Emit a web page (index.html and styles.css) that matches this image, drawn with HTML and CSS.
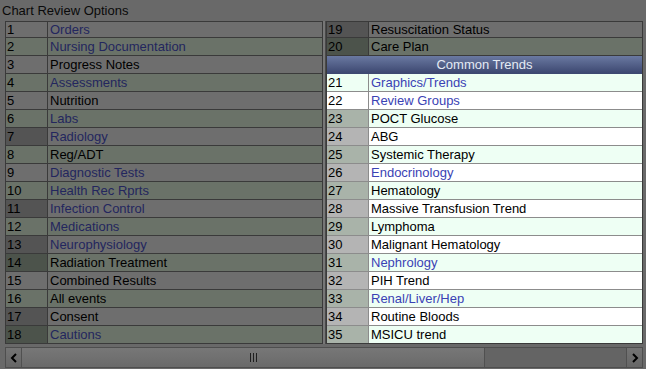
FILE: index.html
```html
<!DOCTYPE html>
<html lang="en">
<head>
    <meta charset="UTF-8">
    <title>Chart Review Options</title>
    <link rel="stylesheet" href="styles.css">
</head>
<body>
    <div class="title">Chart Review Options</div>
    <div class="panes">
        <div class="pane left">
            <div class="row"><div class="num">1</div><div class="txt link">Orders</div></div>
            <div class="row alt"><div class="num">2</div><div class="txt link">Nursing Documentation</div></div>
            <div class="row"><div class="num">3</div><div class="txt">Progress Notes</div></div>
            <div class="row alt"><div class="num">4</div><div class="txt link">Assessments</div></div>
            <div class="row"><div class="num">5</div><div class="txt">Nutrition</div></div>
            <div class="row alt"><div class="num">6</div><div class="txt link">Labs</div></div>
            <div class="row"><div class="num dark">7</div><div class="txt link">Radiology</div></div>
            <div class="row alt"><div class="num">8</div><div class="txt">Reg/ADT</div></div>
            <div class="row"><div class="num">9</div><div class="txt link">Diagnostic Tests</div></div>
            <div class="row alt"><div class="num">10</div><div class="txt link">Health Rec Rprts</div></div>
            <div class="row"><div class="num dark">11</div><div class="txt link">Infection Control</div></div>
            <div class="row alt"><div class="num">12</div><div class="txt link">Medications</div></div>
            <div class="row"><div class="num dark">13</div><div class="txt link">Neurophysiology</div></div>
            <div class="row alt"><div class="num dark">14</div><div class="txt">Radiation Treatment</div></div>
            <div class="row"><div class="num">15</div><div class="txt">Combined Results</div></div>
            <div class="row alt"><div class="num">16</div><div class="txt">All events</div></div>
            <div class="row"><div class="num dark">17</div><div class="txt">Consent</div></div>
            <div class="row alt"><div class="num dark">18</div><div class="txt link">Cautions</div></div>
        </div>
        <div class="splitter"></div>
        <div class="pane right">
            <div class="row"><div class="num dark">19</div><div class="txt">Resuscitation Status</div></div>
            <div class="row alt"><div class="num dark">20</div><div class="txt">Care Plan</div></div>
            <div class="group">Common Trends</div>
            <div class="trow mint"><div class="num">21</div><div class="txt link">Graphics/Trends</div></div>
            <div class="trow"><div class="num">22</div><div class="txt link">Review Groups</div></div>
            <div class="trow mint"><div class="num grey">23</div><div class="txt">POCT Glucose</div></div>
            <div class="trow"><div class="num grey">24</div><div class="txt">ABG</div></div>
            <div class="trow mint"><div class="num grey">25</div><div class="txt">Systemic Therapy</div></div>
            <div class="trow"><div class="num grey">26</div><div class="txt link">Endocrinology</div></div>
            <div class="trow mint"><div class="num grey">27</div><div class="txt">Hematology</div></div>
            <div class="trow"><div class="num grey">28</div><div class="txt">Massive Transfusion Trend</div></div>
            <div class="trow mint"><div class="num grey">29</div><div class="txt">Lymphoma</div></div>
            <div class="trow"><div class="num grey">30</div><div class="txt">Malignant Hematology</div></div>
            <div class="trow mint"><div class="num grey">31</div><div class="txt link">Nephrology</div></div>
            <div class="trow"><div class="num grey">32</div><div class="txt">PIH Trend</div></div>
            <div class="trow mint"><div class="num grey">33</div><div class="txt link">Renal/Liver/Hep</div></div>
            <div class="trow"><div class="num grey">34</div><div class="txt">Routine Bloods</div></div>
            <div class="trow mint"><div class="num grey">35</div><div class="txt">MSICU trend</div></div>
        </div>
    </div>
    <div class="hscroll">
        <div class="arrow">
            <svg width="8" height="10" viewBox="0 0 8 10"><path d="M6 1 L2 5 L6 9" fill="none" stroke="#000" stroke-width="2"/></svg>
        </div>
        <div class="thumb">
            <div class="grip"><span></span><span></span><span></span></div>
        </div>
        <div class="track"></div>
        <div class="arrow">
            <svg width="8" height="10" viewBox="0 0 8 10"><path d="M2 1 L6 5 L2 9" fill="none" stroke="#000" stroke-width="2"/></svg>
        </div>
    </div>
</body>
</html>
```

FILE: styles.css
```css
body {
    margin: 0;
    background: #696969;
    font-family: "Liberation Sans", Arial, sans-serif;
    font-size: 13px;
    color: #000;
}
.title {
    height: 21px;
    line-height: 22px;
    padding-left: 2px;
    color: #0a0a0a;
}
.panes {
    display: flex;
    margin-left: 5px;
    height: 323px;
}
.pane {
    border: 1px solid #3a3a3a;
    box-sizing: border-box;
    height: 323px;
}
.left {
    width: 318px;
}
.splitter {
    width: 3px;
    box-sizing: border-box;
    border-right: 1px solid #4a4a4a;
    background: #777;
}
.right {
    width: 317px;
}
.row, .trow, .group {
    display: flex;
    height: 17px;
    line-height: 17px;
    border-top: 1px solid #3a3a3a;
    background: #6e6e6e;
}
.row:first-child {
    border-top: none;
    height: 15px;
    line-height: 16px;
}
.row.alt {
    background: #6a7268;
}
.num {
    width: 42px;
    flex: none;
    padding-left: 1px;
    box-sizing: border-box;
    border-right: 1px solid #3a3a3a;
}
.num.dark {
    background: #545454;
}
.alt .num.dark {
    background: #4c534b;
}
.txt {
    padding-left: 2px;
    white-space: nowrap;
}
.link {
    color: #23265e;
}
.group {
    justify-content: center;
    color: #e4eaf4;
    background: linear-gradient(#6a79a1, #3d4871);
}
.trow {
    background: #fff;
    border-top-color: #8c8c8c;
}
.group + .trow {
    border-top-color: #3d4871;
}
.trow.mint {
    background: #eefff4;
}
.trow .num {
    border-right-color: #8c8c8c;
}
.trow .num.grey {
    background: #b4b4b4;
}
.trow.mint .num.grey {
    background: #a9b3a9;
}
.trow .link {
    color: #3a42b4;
}
.hscroll {
    display: flex;
    margin: 3px 0 0 5px;
    width: 638px;
    height: 21px;
    box-sizing: border-box;
    border: 1px solid #4e4e4e;
    background: #646464;
}
.arrow {
    width: 15px;
    flex: none;
    display: flex;
    align-items: center;
    justify-content: center;
    background: linear-gradient(#747474, #666);
    border-right: 1px solid #505050;
}
.arrow:last-child {
    border-right: none;
    border-left: 1px solid #505050;
}
.thumb {
    width: 462px;
    flex: none;
    display: flex;
    align-items: center;
    justify-content: center;
    background: linear-gradient(#777, #6a6a6a);
    border-right: 1px solid #505050;
}
.grip {
    display: flex;
    gap: 2px;
}
.grip span {
    width: 1px;
    height: 9px;
    background: #1e1e1e;
}
.track {
    flex: 1;
}
```
